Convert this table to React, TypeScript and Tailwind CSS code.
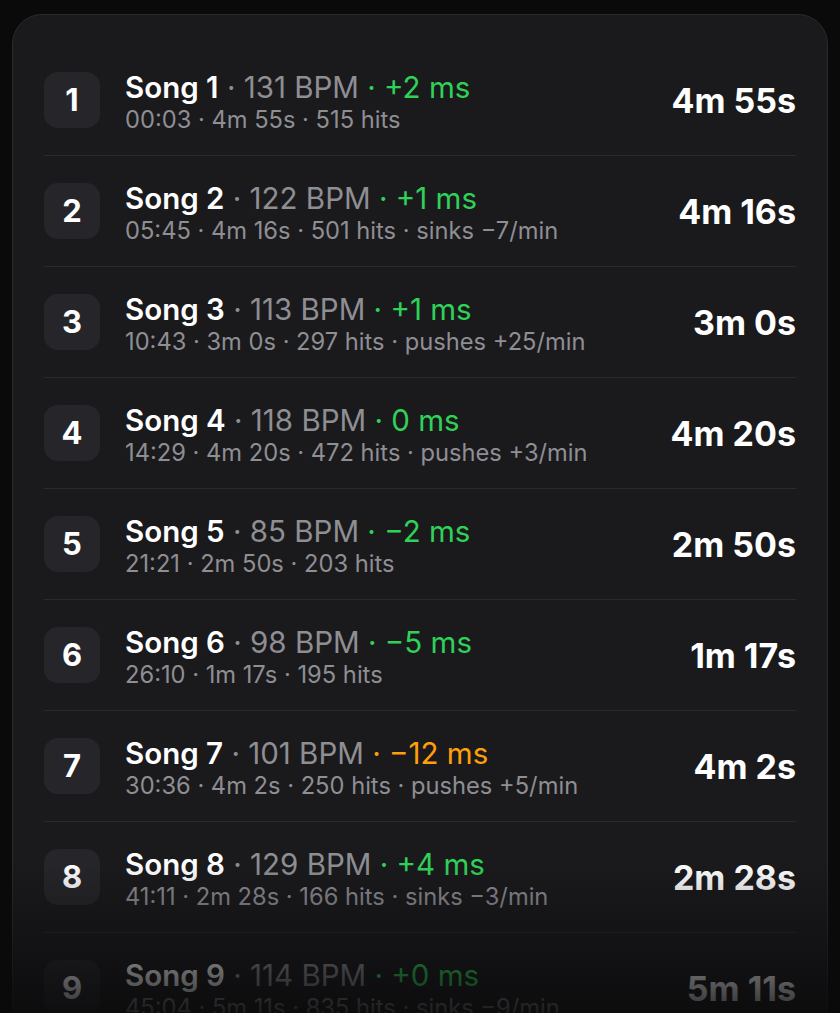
const songs = [
  { n: 1, bpm: 131, off: "+2 ms", warn: false, meta: "00:03 · 4m 55s · 515 hits", dur: "4m 55s" },
  { n: 2, bpm: 122, off: "+1 ms", warn: false, meta: "05:45 · 4m 16s · 501 hits · sinks −7/min", dur: "4m 16s" },
  { n: 3, bpm: 113, off: "+1 ms", warn: false, meta: "10:43 · 3m 0s · 297 hits · pushes +25/min", dur: "3m 0s" },
  { n: 4, bpm: 118, off: "0 ms", warn: false, meta: "14:29 · 4m 20s · 472 hits · pushes +3/min", dur: "4m 20s" },
  { n: 5, bpm: 85, off: "−2 ms", warn: false, meta: "21:21 · 2m 50s · 203 hits", dur: "2m 50s" },
  { n: 6, bpm: 98, off: "−5 ms", warn: false, meta: "26:10 · 1m 17s · 195 hits", dur: "1m 17s" },
  { n: 7, bpm: 101, off: "−12 ms", warn: true, meta: "30:36 · 4m 2s · 250 hits · pushes +5/min", dur: "4m 2s" },
  { n: 8, bpm: 129, off: "+4 ms", warn: false, meta: "41:11 · 2m 28s · 166 hits · sinks −3/min", dur: "2m 28s" },
  { n: 9, bpm: 114, off: "+0 ms", warn: false, meta: "45:04 · 5m 11s · 835 hits · sinks −9/min", dur: "5m 11s" },
];

const App = () => {
  return (
    <div className="relative h-[1013px] overflow-hidden bg-[#0a0a0b] pt-[14px] font-['Inter',sans-serif]">
      <div className="mx-3 rounded-t-[30px] border border-[#2a2a2e] bg-[#1a1a1d] px-[31px] pt-[30px]">
        {songs.map((s) => (
          <div key={s.n} className="flex h-[111px] items-center border-b border-[#2a2a2e]">
            <div className="flex h-14 w-14 shrink-0 items-center justify-center rounded-[14px] bg-[#26262a] text-[31px] font-bold text-white">
              {s.n}
            </div>
            <div className="ml-[25px] flex min-w-0 flex-1 flex-col pt-[3px]">
              <div className="text-[29.5px] leading-[34px] whitespace-nowrap">
                <span className="font-semibold text-white">Song {s.n}</span>
                <span className="text-[#8e8e93]"> · {s.bpm} BPM</span>
                <span className={s.warn ? "text-[#ff9f0a]" : "text-[#30d158]"}> · {s.off}</span>
              </div>
              <div className="mt-[2px] text-[23.7px] leading-[28px] whitespace-nowrap text-[#8e8e93]">{s.meta}</div>
            </div>
            <div className="shrink-0 text-[34px] font-bold text-white">{s.dur}</div>
          </div>
        ))}
      </div>
      <div className="pointer-events-none absolute inset-x-0 bottom-0 h-[150px] bg-gradient-to-b from-transparent to-[#0a0a0b]/85" />
    </div>
  );
};

export default App;
